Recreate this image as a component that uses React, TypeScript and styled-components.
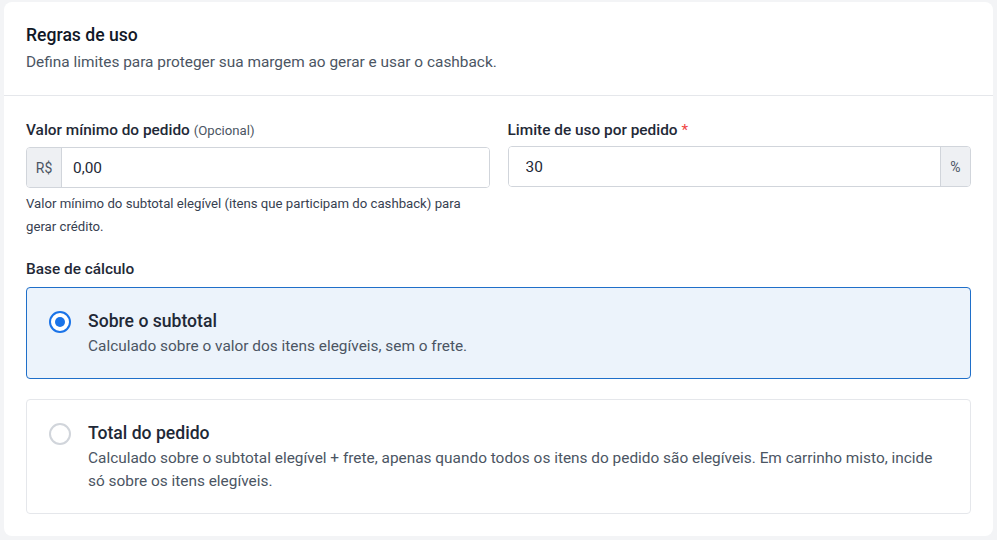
import { useState } from 'react';
import styled, { createGlobalStyle } from 'styled-components';

type BaseOption = {
	id: 'subtotal' | 'total';
	title: string;
	description: string;
};

const baseOptions: BaseOption[] = [
	{
		id: 'subtotal',
		title: 'Sobre o subtotal',
		description: 'Calculado sobre o valor dos itens elegíveis, sem o frete.',
	},
	{
		id: 'total',
		title: 'Total do pedido',
		description:
			'Calculado sobre o subtotal elegível + frete, apenas quando todos os itens do pedido são elegíveis. Em carrinho misto, incide só sobre os itens elegíveis.',
	},
];

const App = () => {
	const [base, setBase] = useState<BaseOption['id']>('subtotal');
	const [minValue, setMinValue] = useState('0,00');
	const [limit, setLimit] = useState('30');

	return (
		<>
			<GlobalStyle />
			<Card>
				<Header>
					<Title>Regras de uso</Title>
					<Subtitle>Defina limites para proteger sua margem ao gerar e usar o cashback.</Subtitle>
				</Header>
				<Body>
					<FieldsGrid>
						<Field>
							<Label>
								Valor mínimo do pedido <Optional>(Opcional)</Optional>
							</Label>
							<InputGroup>
								<Addon side='left'>R$</Addon>
								<Input value={minValue} onChange={(e) => setMinValue(e.target.value)} />
							</InputGroup>
							<Hint>Valor mínimo do subtotal elegível (itens que participam do cashback) para gerar crédito.</Hint>
						</Field>
						<Field>
							<Label>
								Limite de uso por pedido <Required>*</Required>
							</Label>
							<InputGroup>
								<Input value={limit} onChange={(e) => setLimit(e.target.value)} />
								<Addon side='right'>%</Addon>
							</InputGroup>
						</Field>
					</FieldsGrid>
					<Section>
						<Label>Base de cálculo</Label>
						<Options>
							{baseOptions.map((option) => (
								<Option key={option.id} selected={base === option.id} onClick={() => setBase(option.id)}>
									<Radio selected={base === option.id} />
									<OptionText>
										<OptionTitle>{option.title}</OptionTitle>
										<OptionDescription>{option.description}</OptionDescription>
									</OptionText>
								</Option>
							))}
						</Options>
					</Section>
				</Body>
			</Card>
		</>
	);
};

const GlobalStyle = createGlobalStyle`
	* {
		box-sizing: border-box;
	}
	body {
		margin: 0;
		padding: 2px 4px;
		background: #f3f4f6;
		font-family: Roboto, 'Noto Sans', sans-serif;
		color: #1f2937;
	}
`;

const Card = styled.div`
	background: #ffffff;
	border-radius: 8px;
	width: 989px;
	height: 534px;
	overflow: hidden;
`;

const Header = styled.div`
	padding: 20px 22px 22px;
	border-bottom: 1px solid #e5e7eb;
`;

const Title = styled.h2`
	margin: 0;
	font-size: 17.6px;
	font-weight: 500;
	line-height: 26px;
	color: #111827;
`;

const Subtitle = styled.p`
	margin: 3px 0 0;
	font-size: 15.4px;
	line-height: 22px;
	color: #4b5563;
`;

const Body = styled.div`
	padding: 23px 22px 22px;
`;

const FieldsGrid = styled.div`
	display: grid;
	grid-template-columns: 1fr 1fr;
	gap: 18px;
`;

const Field = styled.div`
	display: flex;
	flex-direction: column;
`;

const Label = styled.div`
	font-size: 15.4px;
	font-weight: 500;
	line-height: 22px;
	color: #1f2937;
	margin-bottom: 5px;
`;

const Optional = styled.span`
	font-size: 13.2px;
	font-weight: 400;
	color: #4b5563;
`;

const Required = styled.span`
	color: #ef4444;
	font-weight: 400;
`;

const InputGroup = styled.div`
	display: flex;
	height: 41px;
	border: 1px solid #d1d5db;
	border-radius: 4px;
	overflow: hidden;
`;

const Addon = styled.span<{ side: 'left' | 'right' }>`
	display: flex;
	align-items: center;
	justify-content: center;
	width: ${({ side }) => (side === 'left' ? '35px' : '30px')};
	background: #eef0f3;
	color: #4b5563;
	font-size: 14px;
	${({ side }) => (side === 'left' ? 'border-right: 1px solid #d1d5db;' : 'border-left: 1px solid #d1d5db;')}
`;

const Input = styled.input`
	flex: 1;
	min-width: 0;
	border: none;
	outline: none;
	padding: 0 17px 0 11px;
	font-family: inherit;
	font-size: 15.4px;
	color: #1f2937;
	background: #ffffff;

	&:first-child {
		padding-left: 17px;
	}
`;

const Hint = styled.p`
	margin: 4px 0 0;
	font-size: 13.2px;
	line-height: 23px;
	color: #374151;
`;

const Section = styled.div`
	margin-top: 20px;
`;

const Options = styled.div`
	display: flex;
	flex-direction: column;
	gap: 20px;
	margin-top: 7px;
`;

const Option = styled.div<{ selected: boolean }>`
	display: flex;
	align-items: flex-start;
	gap: 17px;
	padding: 19px 22px 20px;
	border: 1px solid ${({ selected }) => (selected ? '#1f6fc9' : '#e5e7eb')};
	border-radius: 4px;
	background: ${({ selected }) => (selected ? '#ecf3fb' : '#ffffff')};
	cursor: pointer;
`;

const Radio = styled.span<{ selected: boolean }>`
	flex: none;
	width: 22px;
	height: 22px;
	margin-top: 4px;
	border-radius: 50%;
	border: 2px solid ${({ selected }) => (selected ? '#1a73e8' : '#d1d5db')};
	background: #ffffff;
	display: flex;
	align-items: center;
	justify-content: center;

	&::after {
		content: '';
		width: 10px;
		height: 10px;
		border-radius: 50%;
		background: ${({ selected }) => (selected ? '#1a73e8' : 'transparent')};
	}
`;

const OptionText = styled.div`
	display: flex;
	flex-direction: column;
`;

const OptionTitle = styled.div`
	font-size: 17.6px;
	font-weight: 500;
	line-height: 28px;
	color: #1f2937;
`;

const OptionDescription = styled.div`
	font-size: 15.4px;
	line-height: 23px;
	color: #4b5563;
`;

export default App;
